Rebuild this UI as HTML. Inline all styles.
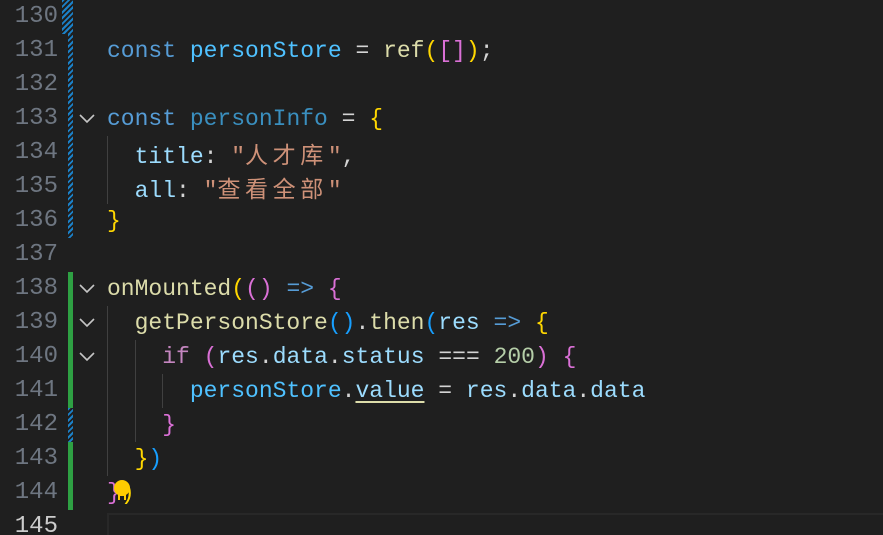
<!DOCTYPE html>
<html style="margin:0;width:883px;height:535px;overflow:hidden"><head><meta charset="utf-8"><style>
body{margin:0;width:883px;height:535px;background:#1f1f1f;overflow:hidden;position:relative;font-family:"Liberation Mono","Noto Sans CJK SC",monospace;font-size:23px}
.n{position:absolute;left:0;width:58px;text-align:right;color:#6e7681;line-height:34px;height:34px;font-size:24px}
.l{position:absolute;left:107px;line-height:34px;height:34px;white-space:pre;color:#d4d4d4}
.k{color:#569cd6}.v{color:#4fc1ff}.vd{color:#3a8fbf}.p{color:#9cdcfe}.s{color:#ce9178}.f{color:#dcdcaa}
.g{color:#ffd700}.m{color:#da70d6}.b{color:#179fff}.c{color:#c586c0}.num{color:#b5cea8}
.cj{letter-spacing:4.6px;font-family:"Noto Sans CJK SC",sans-serif}
.ig{position:absolute;width:1px;background:#404040}
.ch{position:absolute;left:77px;width:20px;height:20px}
.hat{position:absolute;background:repeating-linear-gradient(135deg,#1b81c8 0 2px,#1f1f1f 2px 4px)}
</style></head><body>
<div class="hat" style="left:62px;top:0;width:11px;height:34px"></div>
<div class="hat" style="left:68px;top:34px;width:5px;height:204px"></div>
<div style="position:absolute;left:68px;top:272px;width:5px;height:136px;background:#2ea043"></div>
<div class="hat" style="left:68px;top:408px;width:5px;height:34px"></div>
<div style="position:absolute;left:68px;top:442px;width:5px;height:68px;background:#2ea043"></div>
<div style="position:absolute;left:107px;top:513px;width:776px;height:30px;border-top:2px solid #282828;border-left:2px solid #282828"></div>

<div class="n" style="top:0">130</div><div class="n" style="top:34px">131</div><div class="n" style="top:68px">132</div><div class="n" style="top:102px">133</div><div class="n" style="top:136px">134</div><div class="n" style="top:170px">135</div><div class="n" style="top:204px">136</div><div class="n" style="top:238px">137</div><div class="n" style="top:272px">138</div><div class="n" style="top:306px">139</div><div class="n" style="top:340px">140</div><div class="n" style="top:374px">141</div><div class="n" style="top:408px">142</div><div class="n" style="top:442px">143</div><div class="n" style="top:476px">144</div><div class="n" style="top:510px;color:#cccccc">145</div>

<svg class="ch" style="top:109px" viewBox="0 0 20 20"><path d="M3 6l7 7 7-7" fill="none" stroke="#c5c5c5" stroke-width="1.6"/></svg>
<svg class="ch" style="top:279px" viewBox="0 0 20 20"><path d="M3 6l7 7 7-7" fill="none" stroke="#c5c5c5" stroke-width="1.6"/></svg>
<svg class="ch" style="top:313px" viewBox="0 0 20 20"><path d="M3 6l7 7 7-7" fill="none" stroke="#c5c5c5" stroke-width="1.6"/></svg>
<svg class="ch" style="top:347px" viewBox="0 0 20 20"><path d="M3 6l7 7 7-7" fill="none" stroke="#c5c5c5" stroke-width="1.6"/></svg>

<div class="ig" style="left:107px;top:136px;height:68px"></div>
<div class="ig" style="left:107px;top:306px;height:170px"></div>
<div class="ig" style="left:135px;top:340px;height:102px"></div>
<div class="ig" style="left:162px;top:374px;height:34px"></div>

<div class="l" style="top:34px"><span class="k">const</span> <span class="v">personStore</span> = <span class="f">ref</span><span class="g">(</span><span class="m">[]</span><span class="g">)</span>;</div>
<div class="l" style="top:102px"><span class="k">const</span> <span class="vd">personInfo</span> = <span class="g">{</span></div>
<div class="l" style="top:136px">  <span class="p">title</span>: <span class="s">"<span class="cj">人才库</span>"</span>,</div>
<div class="l" style="top:170px">  <span class="p">all</span>: <span class="s">"<span class="cj">查看全部</span>"</span></div>
<div class="l" style="top:204px"><span class="g">}</span></div>
<div class="l" style="top:272px"><span class="f">onMounted</span><span class="g">(</span><span class="m">()</span> <span class="k">=&gt;</span> <span class="m">{</span></div>
<div class="l" style="top:306px">  <span class="f">getPersonStore</span><span class="b">()</span>.<span class="f">then</span><span class="b">(</span><span class="p">res</span> <span class="k">=&gt;</span> <span class="g">{</span></div>
<div class="l" style="top:340px">    <span class="c">if</span> <span class="m">(</span><span class="p">res</span>.<span class="p">data</span>.<span class="p">status</span> === <span class="num">200</span><span class="m">)</span> <span class="m">{</span></div>
<div class="l" style="top:374px">      <span class="v">personStore</span>.<span class="p" style="text-decoration:underline;text-decoration-color:#dcdcaa;text-underline-offset:4px">value</span> = <span class="p">res</span>.<span class="p">data</span>.<span class="p">data</span></div>
<div class="l" style="top:408px">    <span class="m">}</span></div>
<div class="l" style="top:442px">  <span class="g">}</span><span class="b">)</span></div>
<div class="l" style="top:476px"><span class="m">}</span><span class="g">)</span></div>
<svg style="position:absolute;left:112px;top:479px" width="20" height="26" viewBox="0 0 20 26"><circle cx="10" cy="9" r="8" fill="#ffcc00"/><rect x="6" y="13" width="8" height="8" fill="#ffcc00"/><rect x="8" y="17" width="4" height="4" fill="#1f1f1f"/></svg>
</body></html>
